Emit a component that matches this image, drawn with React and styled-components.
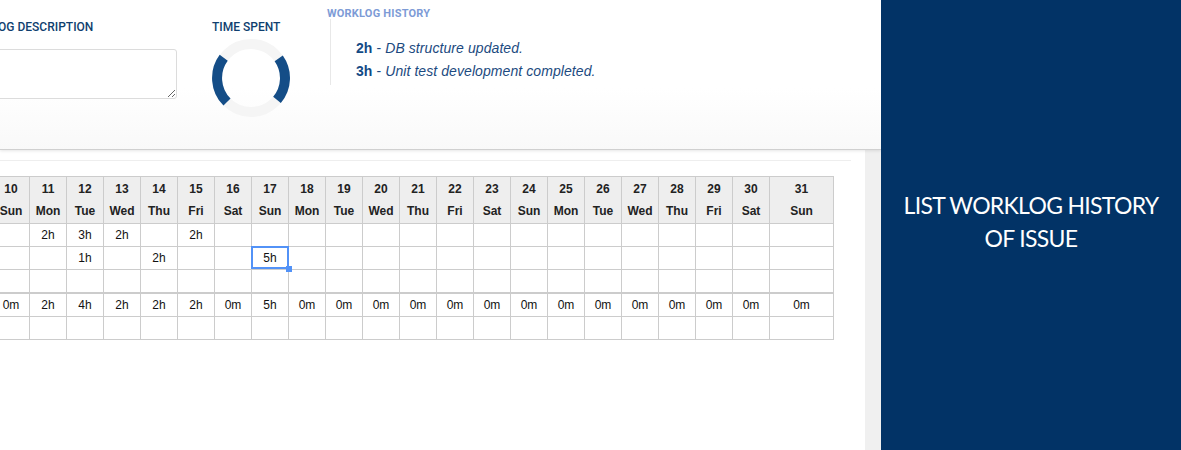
import React from 'react';
import styled, { createGlobalStyle } from 'styled-components';

const Global = createGlobalStyle`
  html, body { margin: 0; padding: 0; background: #fff; }
  #root { width: 1181px; height: 450px; overflow: hidden; }
`;

const Page = styled.div`
  display: flex;
  width: 1181px;
  height: 450px;
  overflow: hidden;
  font-family: "Liberation Sans", Arial, sans-serif;
`;

const Main = styled.div`
  width: 881px;
  height: 450px;
  flex: none;
  overflow: hidden;
  display: flex;
  flex-direction: column;
`;

const TopPanel = styled.header`
  position: relative;
  z-index: 1;
  flex: none;
  height: 149px;
  box-sizing: content-box;
  display: flex;
  align-items: flex-start;
  background: linear-gradient(to bottom, #fff 0, #fff 88px, #f9f9f9 149px);
  border-bottom: 1px solid #d0d0d0;
  box-shadow: 0 1px 3px rgba(0, 0, 0, 0.1);
`;

const Label = styled.div`
  font-family: Roboto, "Liberation Sans", sans-serif;
  font-weight: 500;
  font-size: 12px;
  line-height: 14px;
  color: #0f3f6f;
  white-space: nowrap;
`;

const DescColumn = styled.section`
  flex: none;
  width: 260px;
  margin-left: -83px;
  padding-top: 20px;
`;

const DescLabel = styled(Label)`
  text-align: left;
  padding-left: 41px;
  margin-bottom: 15px;
`;

const Description = styled.textarea`
  display: block;
  box-sizing: border-box;
  width: 260px;
  height: 50px;
  margin: 0;
  background: #fff;
  border: 1px solid #dcdcdc;
  border-radius: 3px;
  resize: both;
  outline: none;
`;

const TimeColumn = styled.section`
  flex: none;
  width: 79px;
  margin-left: 35px;
  padding-top: 20px;
  display: flex;
  flex-direction: column;
  align-items: flex-start;
`;

const Ring = styled.svg`
  display: block;
  width: 78px;
  height: 78px;
  margin-top: 5px;
`;

const HistoryColumn = styled.section`
  flex: none;
  width: 400px;
  margin-left: 39px;
  padding-top: 7px;
`;

const HistoryTitle = styled.div`
  font-family: Roboto, "Liberation Sans", sans-serif;
  font-weight: 700;
  font-size: 11px;
  letter-spacing: 0.2px;
  line-height: 13px;
  color: #7d9bd6;
  margin-left: -3px;
  margin-bottom: -1px;
  white-space: nowrap;
`;

const HistoryBody = styled.div`
  border-left: 1px solid #e8e8e8;
  height: 66px;
  box-sizing: border-box;
  padding: 18px 0 0 25px;
`;

const HistoryLine = styled.div`
  font-size: 14px;
  line-height: 23px;
  font-style: italic;
  letter-spacing: 0.08px;
  color: #1c4a80;
  white-space: nowrap;
`;

const Hours = styled.b`
  font-style: normal;
  color: #134a85;
`;

const Dash = styled.span`
  font-style: normal;
`;

const Lower = styled.div`
  flex: 1;
  display: flex;
  min-height: 0;
`;

const Content = styled.div`
  flex: none;
  width: 865px;
  background: #fff;
  padding-top: 10px;
  box-sizing: border-box;
`;

const Rule = styled.div`
  width: 851px;
  height: 1px;
  background: #eeeeee;
  margin-bottom: 15px;
`;

const Scrollbar = styled.div`
  flex: none;
  width: 16px;
  background: #f0f0f0;
`;

const Sheet = styled.table`
  border-collapse: collapse;
  table-layout: fixed;
  width: 842px;
  margin-left: -8px;
  font-size: 12px;
  color: #111;
`;

const Head = styled.th`
  background: #eeeeee;
  border: 1px solid #cccccc;
  padding: 0;
  height: 46px;
  font-weight: bold;
  line-height: 22px;
  color: #222;
  text-align: center;
  vertical-align: middle;
`;

const HeadLine = styled.div`
  white-space: nowrap;
`;

const Cell = styled.td`
  position: relative;
  border: 1px solid #cccccc;
  border-top: ${(p) => (p.$thick ? '2px' : '1px')} solid #cccccc;
  padding: 0;
  height: 22px;
  line-height: 21px;
  text-align: center;
`;

const Selection = styled.div`
  position: absolute;
  z-index: 2;
  left: -1px;
  top: -1px;
  width: 38px;
  height: 23px;
  box-sizing: border-box;
  border: 2px solid #5292f7;
  pointer-events: none;
`;

const Handle = styled.span`
  position: absolute;
  right: -5px;
  bottom: -5px;
  width: 6px;
  height: 6px;
  background: #5292f7;
`;

const Banner = styled.aside`
  flex: none;
  width: 300px;
  height: 450px;
  background: #023366;
  color: #fff;
  box-sizing: border-box;
  padding-top: 189px;
  text-align: center;
  font-family: Lato, "Open Sans", sans-serif;
  font-size: 23px;
  letter-spacing: -0.7px;
  line-height: 33px;
  font-weight: 400;
`;

const days = [
  [10, 'Sun'], [11, 'Mon'], [12, 'Tue'], [13, 'Wed'], [14, 'Thu'], [15, 'Fri'], [16, 'Sat'],
  [17, 'Sun'], [18, 'Mon'], [19, 'Tue'], [20, 'Wed'], [21, 'Thu'], [22, 'Fri'], [23, 'Sat'],
  [24, 'Sun'], [25, 'Mon'], [26, 'Tue'], [27, 'Wed'], [28, 'Thu'], [29, 'Fri'], [30, 'Sat'], [31, 'Sun'],
];

const rows = [
  { 11: '2h', 12: '3h', 13: '2h', 15: '2h' },
  { 12: '1h', 14: '2h', 17: '5h' },
  {},
  { 10: '0m', 11: '2h', 12: '4h', 13: '2h', 14: '2h', 15: '2h', 16: '0m', 17: '5h', 18: '0m', 19: '0m', 20: '0m', 21: '0m', 22: '0m', 23: '0m', 24: '0m', 25: '0m', 26: '0m', 27: '0m', 28: '0m', 29: '0m', 30: '0m', 31: '0m' },
  {},
];

export default function App() {
  return (
    <Page>
      <Global />
      <Main>
        <TopPanel>
          <DescColumn>
            <DescLabel>WORKLOG DESCRIPTION</DescLabel>
            <Description readOnly />
          </DescColumn>
          <TimeColumn>
            <Label>TIME SPENT</Label>
            <Ring viewBox="0 0 78 78">
              <circle cx="39" cy="39" r="34" fill="none" stroke="#f5f5f5" strokeWidth="10" />
              <path d="M11.7 18.8 A34 34 0 0 0 15 63" fill="none" stroke="#144d87" strokeWidth="10" />
              <path d="M66.7 19.3 A34 34 0 0 1 65 60.9" fill="none" stroke="#144d87" strokeWidth="10" />
            </Ring>
          </TimeColumn>
          <HistoryColumn>
            <HistoryTitle>WORKLOG HISTORY</HistoryTitle>
            <HistoryBody>
              <HistoryLine><Hours>2h</Hours> <Dash>-</Dash> DB structure updated.</HistoryLine>
              <HistoryLine><Hours>3h</Hours> <Dash>-</Dash> Unit test development completed.</HistoryLine>
            </HistoryBody>
          </HistoryColumn>
        </TopPanel>
        <Lower>
          <Content>
            <Rule />
            <Sheet>
              <colgroup>
                {days.map(([d]) => (
                  <col key={d} style={{ width: d === 31 ? 64 : 37 }} />
                ))}
              </colgroup>
              <thead>
                <tr>
                  {days.map(([d, n]) => (
                    <Head key={d}>
                      <HeadLine>{d}</HeadLine>
                      <HeadLine>{n}</HeadLine>
                    </Head>
                  ))}
                </tr>
              </thead>
              <tbody>
                {rows.map((row, i) => (
                  <tr key={i}>
                    {days.map(([d]) => {
                      const selected = i === 1 && d === 17;
                      return (
                        <Cell key={d} $thick={i === 3}>
                          {row[d]}
                          {selected && (
                            <Selection>
                              <Handle />
                            </Selection>
                          )}
                        </Cell>
                      );
                    })}
                  </tr>
                ))}
              </tbody>
            </Sheet>
          </Content>
          <Scrollbar />
        </Lower>
      </Main>
      <Banner>
        LIST WORKLOG HISTORY
        <br />
        OF ISSUE
      </Banner>
    </Page>
  );
}
